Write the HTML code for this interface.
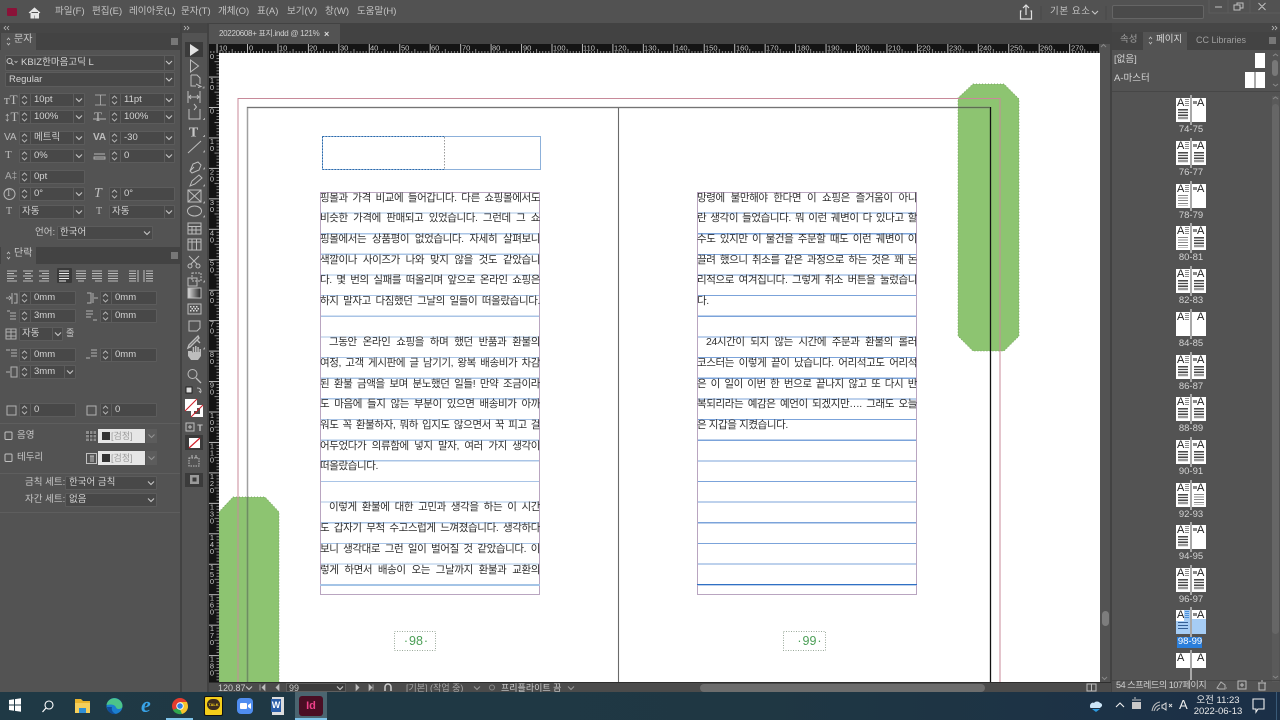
<!DOCTYPE html>
<html lang="ko">
<head>
<meta charset="utf-8">
<title>InDesign</title>
<style>
html,body{margin:0;padding:0;width:1280px;height:720px;overflow:hidden;background:#535353}
body{position:relative;font-family:"Liberation Sans","Noto Sans CJK KR",sans-serif;font-size:10px;color:#c8c8c8}
div,span.a{position:absolute;box-sizing:border-box}
.m{top:5px;font-size:9.5px;line-height:14px;white-space:nowrap;color:#c4c4c4}
.f{background:#484848;border:1px solid #5c5c5c;border-radius:1px;height:14px;font-size:9.5px;line-height:12px;white-space:nowrap;color:#d4d4d4}
.f span{position:absolute;top:0}
.d{position:absolute;top:0;bottom:0;width:1px;background:#5c5c5c}
.l{font-size:9.5px;line-height:14px;white-space:nowrap;color:#c8c8c8}
.tx{left:320px;width:220px;height:14px;line-height:14px;font-size:10.5px;letter-spacing:-.4px;color:#2e2e2e;text-align:justify;text-align-last:justify;font-family:"Liberation Sans","Noto Sans CJK KR",sans-serif;white-space:normal;overflow:hidden}
.tr{left:697px;width:220px}
.no{text-align-last:left}
.ind{text-indent:9px}
.t{left:1176px;width:30px;height:24px;background:#fff}
.t:before{content:"";position:absolute;left:14px;top:-3px;width:2px;height:30px;background:#a8a8a8}
.t b{position:absolute;top:0;left:1px;font-size:11px;line-height:11px;font-weight:400;color:#222;font-family:"Liberation Sans",sans-serif}
.t b+b{left:21px}
.t i{position:absolute;display:block;background:repeating-linear-gradient(to bottom,#4a4a4a 0 1.300px,#e8e8e8 1.300px 2.800px)}
.t i.la{left:2px;top:11px;width:10px;height:11px}
.t i.ra{left:18px;top:11px;width:10px;height:11px}
.t i.lc{left:2px;top:11px;width:10px;height:11px;background:repeating-linear-gradient(to bottom,#8a8a8a 0 1px,#fff 1px 2.600px)}
.t i.rc{left:18px;top:11px;width:10px;height:11px;background:repeating-linear-gradient(to bottom,#8a8a8a 0 1px,#fff 1px 2.600px)}
.t i.h1{left:9px;top:1px;width:4px;height:8px;background:repeating-linear-gradient(to bottom,#8a8a8a 0 1px,#fff 1px 2px)}
.t i.h2{left:17px;top:3px;width:4px;height:3px;background:#888}
.n{left:1176px;width:30px;text-align:center;font-size:9.5px;line-height:12px;color:#d4d4d4;white-space:nowrap}
.rul{font-family:"Liberation Sans",sans-serif;font-size:7.5px;fill:#c9c9c9}
</style>
</head>
<body>

<!-- top bar -->
<div style="left:0;top:0;width:1280px;height:23px;background:#525252"></div>
<div class="m" style="left:55px">파일(F)</div>
<div class="m" style="left:92px">편집(E)</div>
<div class="m" style="left:129px">레이아웃(L)</div>
<div class="m" style="left:181px">문자(T)</div>
<div class="m" style="left:218px">개체(O)</div>
<div class="m" style="left:257px">표(A)</div>
<div class="m" style="left:287px">보기(V)</div>
<div class="m" style="left:325px">창(W)</div>
<div class="m" style="left:357px">도움말(H)</div>
<div class="m" style="left:1050px;letter-spacing:.6px">기본 요소</div>
<div style="left:1112px;top:5px;width:92px;height:14px;background:#4a4a4a;border:1px solid #656565;border-radius:2px"></div>

<!-- panel strips -->
<div style="left:0;top:23px;width:181px;height:10px;background:#464646"></div>
<div style="left:0;top:33px;width:181px;height:17px;background:#434343"></div>
<div style="left:1px;top:33px;width:35px;height:17px;background:#535353"></div>
<div class="l" style="left:14px;top:33px;font-size:10px">문자</div>
<div style="left:171px;top:38px;width:7px;height:7px;background:#777"></div>
<div style="left:0;top:247px;width:181px;height:17px;background:#434343"></div>
<div style="left:1px;top:247px;width:35px;height:17px;background:#535353"></div>
<div class="l" style="left:14px;top:247px;font-size:10px">단락</div>
<div style="left:171px;top:252px;width:7px;height:7px;background:#777"></div>
<div style="left:180px;top:23px;width:2px;height:669px;background:#424242"></div>
<div style="left:182px;top:23px;width:26px;height:10px;background:#464646"></div>
<div style="left:207px;top:23px;width:2px;height:669px;background:#424242"></div>

<!-- character panel fields -->
<div class="f" style="left:5px;top:55px;width:170px;height:16px;line-height:14px"><span style="left:15px">KBIZ한마음고딕 L</span><i class="d" style="left:158px"></i></div>
<div class="f" style="left:5px;top:72px;width:170px;height:15px;line-height:13px"><span style="left:3px">Regular</span><i class="d" style="left:158px"></i></div>

<div class="f" style="left:19px;top:93px;width:66px"><i class="d" style="left:10px"></i><i class="d" style="left:53px"></i><span style="left:14px">10pt</span></div>
<div class="f" style="left:109px;top:93px;width:66px"><i class="d" style="left:10px"></i><i class="d" style="left:54px"></i><span style="left:14px">11pt</span></div>
<div class="f" style="left:19px;top:110px;width:66px"><i class="d" style="left:10px"></i><i class="d" style="left:53px"></i><span style="left:14px">100%</span></div>
<div class="f" style="left:109px;top:110px;width:66px"><i class="d" style="left:10px"></i><i class="d" style="left:54px"></i><span style="left:14px">100%</span></div>
<div class="f" style="left:19px;top:131px;width:66px"><i class="d" style="left:10px"></i><i class="d" style="left:53px"></i><span style="left:14px">메트릭</span></div>
<div class="f" style="left:109px;top:131px;width:66px"><i class="d" style="left:10px"></i><i class="d" style="left:54px"></i><span style="left:14px">-30</span></div>
<div class="f" style="left:19px;top:149px;width:66px"><i class="d" style="left:10px"></i><i class="d" style="left:53px"></i><span style="left:14px">0%</span></div>
<div class="f" style="left:109px;top:149px;width:66px"><i class="d" style="left:10px"></i><i class="d" style="left:54px"></i><span style="left:14px">0</span></div>
<div class="f" style="left:19px;top:170px;width:66px"><i class="d" style="left:10px"></i><span style="left:14px">0pt</span></div>
<div class="f" style="left:19px;top:187px;width:66px"><i class="d" style="left:10px"></i><i class="d" style="left:53px"></i><span style="left:14px">0°</span></div>
<div class="f" style="left:109px;top:187px;width:66px"><i class="d" style="left:10px"></i><span style="left:14px">0°</span></div>
<div class="f" style="left:19px;top:205px;width:66px"><i class="d" style="left:53px"></i><span style="left:2px">자동</span></div>
<div class="f" style="left:109px;top:205px;width:66px"><i class="d" style="left:54px"></i><span style="left:2px">자동</span></div>
<div class="l" style="left:35px;top:226px">언어:</div>
<div class="f" style="left:57px;top:226px;width:96px"><span style="left:2px">한국어</span></div>

<div class="l" style="left:4px;top:92px;font:400 13px/15px 'Liberation Serif',serif;color:#bdbdbd">ᴛT</div>
<div class="l" style="left:4px;top:109px;font:400 13px/15px 'Liberation Serif',serif;color:#bdbdbd">↕T</div>
<div class="l" style="left:4px;top:130px;font:400 10px/15px 'Liberation Sans',sans-serif;color:#bdbdbd">VA</div>
<div class="l" style="left:93px;top:130px;font:700 10px/15px 'Liberation Sans',sans-serif;color:#bdbdbd">VA</div>
<div class="l" style="left:94px;top:109px;font:400 13px/15px 'Liberation Serif',serif;color:#bdbdbd">T</div>
<div class="l" style="left:5px;top:148px;font:400 11px/15px 'Liberation Serif',serif;color:#bdbdbd">T</div>
<div class="l" style="left:5px;top:169px;font:400 10px/15px 'Liberation Sans',sans-serif;color:#a8a8a8">A‡</div>
<div class="l" style="left:94px;top:186px;font:italic 400 14px/15px 'Liberation Serif',serif;color:#bdbdbd">T</div>
<div class="l" style="left:6px;top:186px;font:400 9px/15px 'Liberation Serif',serif;color:#bdbdbd">T</div>
<div class="l" style="left:6px;top:204px;font:400 10px/15px 'Liberation Serif',serif;color:#bdbdbd">T</div>
<div class="l" style="left:96px;top:204px;font:400 10px/15px 'Liberation Serif',serif;color:#bdbdbd">T</div>

<!-- paragraph panel fields -->
<div class="f" style="left:19px;top:291px;width:57px"><i class="d" style="left:10px"></i><span style="left:14px">0mm</span></div>
<div class="f" style="left:100px;top:291px;width:57px"><i class="d" style="left:10px"></i><span style="left:14px">0mm</span></div>
<div class="f" style="left:19px;top:309px;width:57px"><i class="d" style="left:10px"></i><span style="left:14px">3mm</span></div>
<div class="f" style="left:100px;top:309px;width:57px"><i class="d" style="left:10px"></i><span style="left:14px">0mm</span></div>
<div class="f" style="left:19px;top:327px;width:44px"><i class="d" style="left:32px"></i><span style="left:2px">자동</span></div>
<div class="l" style="left:66px;top:326px;font-size:9px">줄</div>
<div class="f" style="left:19px;top:348px;width:57px"><i class="d" style="left:10px"></i><span style="left:14px">0mm</span></div>
<div class="f" style="left:100px;top:348px;width:57px"><i class="d" style="left:10px"></i><span style="left:14px">0mm</span></div>
<div class="f" style="left:19px;top:365px;width:57px"><i class="d" style="left:10px"></i><i class="d" style="left:44px"></i><span style="left:14px">3mm</span></div>
<div class="f" style="left:19px;top:403px;width:57px"><i class="d" style="left:10px"></i><span style="left:14px">0</span></div>
<div class="f" style="left:100px;top:403px;width:57px"><i class="d" style="left:10px"></i><span style="left:14px">0</span></div>
<div style="left:0;top:423px;width:180px;height:1px;background:#5e5e5e"></div>
<div class="l" style="left:17px;top:429px">음영</div>
<div class="l" style="left:17px;top:451px">테두리</div>
<div style="left:98px;top:429px;width:47px;height:14px;background:#e6e6e6"></div>
<div style="left:102px;top:432px;width:8px;height:8px;background:#333"></div>
<div class="l" style="left:111px;top:429px;color:#9a9a9a;font-size:9px">[검정]</div>
<div style="left:98px;top:451px;width:47px;height:14px;background:#e6e6e6"></div>
<div style="left:102px;top:454px;width:8px;height:8px;background:#333"></div>
<div class="l" style="left:111px;top:451px;color:#9a9a9a;font-size:9px">[검정]</div>
<div style="left:146px;top:429px;width:11px;height:14px;background:#5c5c5c"></div>
<div style="left:146px;top:451px;width:11px;height:14px;background:#5c5c5c"></div>
<div style="left:0;top:473px;width:180px;height:1px;background:#5e5e5e"></div>
<div class="l" style="left:25px;top:476px">금칙 세트:</div>
<div class="f" style="left:65px;top:476px;width:92px"><span style="left:3px">한국어 금칙</span></div>
<div class="l" style="left:25px;top:493px">자간 세트:</div>
<div class="f" style="left:65px;top:493px;width:92px"><span style="left:3px">없음</span></div>
<div style="left:0;top:512px;width:180px;height:1px;background:#5e5e5e"></div>

<!-- document tab -->
<div style="left:209px;top:23px;width:902px;height:21px;background:#424242"></div>
<div style="left:209px;top:24px;width:131px;height:20px;background:#535353"></div>
<div style="left:219px;top:27px;font-size:8px;letter-spacing:-.3px;line-height:14px;color:#d0d0d0;white-space:nowrap">20220608+ 표지.indd @ 121%</div>
<div style="left:324px;top:27px;font-size:9px;line-height:14px;color:#ddd;font-weight:700">×</div>

<!-- canvas -->
<div style="left:219px;top:53px;width:881px;height:630px;background:#fff;overflow:hidden"></div>

<!-- shapes -->
<svg style="position:absolute;left:0;top:0" width="1280" height="720" viewBox="0 0 1280 720">
  <defs>
    <clipPath id="cv"><rect x="219" y="53" width="881" height="630"/></clipPath>
  </defs>
  <g clip-path="url(#cv)">
    <polygon points="973,84 1004,84 1019,99 1019,336 1004,351 973,351 958,336 958,98" fill="#8dc471" stroke="#6f9a58" stroke-dasharray="1 2" stroke-width=".8"/>
    <polygon points="233,497 265,497 279,512 279,690 219,690 219,512" fill="#8dc471" stroke="#6f9a58" stroke-dasharray="1 2" stroke-width=".8"/>
    <!-- bleed -->
    <path d="M238 700V98.500H1000V700" fill="none" stroke="#c88a9a" stroke-width="1"/>
    <!-- page edges -->
    <path d="M247.500 700V107.500H990.500" fill="none" stroke="#a0a0a0" stroke-width="1.500"/>
    <path d="M618.500 107V700" stroke="#6a6a6a" stroke-width="1.100"/>
    <path d="M990.500 107V700" stroke="#111" stroke-width="1.300"/>
    <path d="M247 107.500H960" stroke="#747474" stroke-width="1"/>
    <path d="M958 107.500H990" stroke="#5d6e50" stroke-width="1.200"/>
    <path d="M247.500 497V690" stroke="#6d8e60" stroke-width="1.500"/>
    <!-- header frame -->
    <rect x="322.500" y="136.500" width="218" height="33" fill="none" stroke="#8cb0da" stroke-width="1"/>
    <path d="M322.500 136.500V169.500" stroke="#2c6aa8" stroke-dasharray="1.500 1.500"/>
    <path d="M322.500 136.500H444M322.500 169.500H444" stroke="#2c6aa8" stroke-dasharray="1.500 1.500"/>
    <path d="M444.500 137V169" stroke="#9a9a9a" stroke-dasharray="1.500 1.500"/>
    <!-- page number frames -->
    <rect x="394.500" y="631.500" width="41" height="19" fill="none" stroke="#9aa89a" stroke-dasharray="1 1.500"/>
    <rect x="783.500" y="631.500" width="42" height="19" fill="none" stroke="#9aa89a" stroke-dasharray="1 1.500"/>
  </g>
</svg>
<div style="left:395px;top:632px;width:42px;height:18px;line-height:18px;text-align:center;font-size:12.5px;word-spacing:-2.5px;color:#4a9e55;white-space:nowrap">· 98 ·</div>
<div style="left:788px;top:632px;width:43px;height:18px;line-height:18px;text-align:center;font-size:12.5px;word-spacing:-2.5px;color:#4a9e55;white-space:nowrap">· 99 ·</div>

<!-- text frames -->
<div style="left:320px;top:192px;width:220px;height:403px;border:1px solid #b9a5c0;background:repeating-linear-gradient(to bottom,transparent 0 19.4px,#a9c4e6 19.4px 20.65px)"></div>
<div style="left:320px;top:584px;width:220px;height:2px;background:#a4c4e6"></div>
<div style="left:697px;top:192px;width:220px;height:403px;border:1px solid #b9a5c0;background:repeating-linear-gradient(to bottom,transparent 0 19.5px,#7ba3da 19.5px 20.65px)"></div>
<div style="left:697px;top:584px;width:220px;height:1px;background:#2f70c4"></div>

<div class="tx" style="top:191px">핑몰과 가격 비교에 들어갑니다. 다른 쇼핑몰에서도</div>
<div class="tx" style="top:211px">비슷한 가격에 판매되고 있었습니다. 그런데 그 쇼</div>
<div class="tx" style="top:232px">핑몰에서는 상품평이 없었습니다. 자세히 살펴보니</div>
<div class="tx" style="top:253px">색깔이나 사이즈가 나와 맞지 않을 것도 같았습니</div>
<div class="tx" style="top:273px">다. 몇 번의 실패를 떠올리며 앞으로 온라인 쇼핑은</div>
<div class="tx" style="top:294px">하지 말자고 다짐했던 그날의 일들이 떠올랐습니다.</div>
<div class="tx ind" style="top:335px">그동안 온라인 쇼핑을 하며 했던 반품과 환불의</div>
<div class="tx" style="top:356px">여정, 고객 게시판에 글 남기기, 왕복 배송비가 차감</div>
<div class="tx" style="top:377px">된 환불 금액을 보며 분노했던 일들! 만약 조금이라</div>
<div class="tx" style="top:397px">도 마음에 들지 않는 부분이 있으면 배송비가 아까</div>
<div class="tx" style="top:418px">워도 꼭 환불하자, 뭐하 입지도 않으면서 꾹 피고 걸</div>
<div class="tx" style="top:439px">어두었다가 의류함에 넣지 말자, 여러 가지 생각이</div>
<div class="tx no" style="top:459px">떠올랐습니다.</div>
<div class="tx ind" style="top:500px">이렇게 환불에 대한 고민과 생각을 하는 이 시간</div>
<div class="tx" style="top:521px">도 갑자기 무척 수고스럽게 느껴졌습니다. 생각하다</div>
<div class="tx" style="top:542px">보니 생각대로 그런 일이 벌어질 것 같았습니다. 이</div>
<div class="tx" style="top:563px">렇게 하면서 배송이 오는 그날까지 환불과 교환의</div>

<div class="tx tr" style="top:191px">망령에 불만해야 한다면 이 쇼핑은 즐거움이 아니</div>
<div class="tx tr" style="top:211px">란 생각이 들었습니다. 뭐 이런 궤변이 다 있나고 할</div>
<div class="tx tr" style="top:232px">수도 있지만 이 물건을 주문할 때도 이런 궤변이 이</div>
<div class="tx tr" style="top:253px">끌려 했으니 취소를 같은 과정으로 하는 것은 꽤 논</div>
<div class="tx tr" style="top:273px">리적으로 여겨집니다. 그렇게 취소 버튼을 눌렀습니</div>
<div class="tx tr no" style="top:294px">다.</div>
<div class="tx tr ind" style="top:335px">24시간이 되지 않는 시간에 주문과 환불의 롤러</div>
<div class="tx tr" style="top:356px">코스터는 이렇게 끝이 났습니다. 어리석고도 어리석</div>
<div class="tx tr" style="top:377px">은 이 일이 이번 한 번으로 끝나지 않고 또 다시 반</div>
<div class="tx tr" style="top:397px">복되리라는 예감은 예언이 되겠지만…. 그래도 오늘</div>
<div class="tx tr no" style="top:418px">은 지갑을 지켰습니다.</div>

<!-- rulers -->
<svg style="position:absolute;left:209px;top:44px" width="891" height="9" viewBox="209 44 891 9">
  <defs>
    <pattern id="hp" x="247" y="44" width="30.450" height="9" patternUnits="userSpaceOnUse">
      <rect x="0" y="0" width="1" height="9" fill="#bbb"/>
      <rect x="3.040" y="7" width=".8" height="2" fill="#aaa"/><rect x="6.090" y="7" width=".8" height="2" fill="#aaa"/>
      <rect x="9.130" y="7" width=".8" height="2" fill="#aaa"/><rect x="12.180" y="7" width=".8" height="2" fill="#aaa"/>
      <rect x="15.220" y="5" width=".8" height="4" fill="#aaa"/><rect x="18.270" y="7" width=".8" height="2" fill="#aaa"/>
      <rect x="21.310" y="7" width=".8" height="2" fill="#aaa"/><rect x="24.360" y="7" width=".8" height="2" fill="#aaa"/>
      <rect x="27.400" y="7" width=".8" height="2" fill="#aaa"/>
    </pattern>
  </defs>
  <rect x="209" y="44" width="891" height="9" fill="#141414"/>
  <rect x="209" y="44" width="891" height="9" fill="url(#hp)"/>
  <g class="rul">
    <text x="219" y="50.500">10</text><text x="249" y="50.500">0</text><text x="279" y="50.500">10</text><text x="309" y="50.500">20</text><text x="340" y="50.500">30</text><text x="370" y="50.500">40</text><text x="401" y="50.500">50</text><text x="431" y="50.500">60</text><text x="462" y="50.500">70</text><text x="492" y="50.500">80</text><text x="523" y="50.500">90</text><text x="553" y="50.500">100</text><text x="583" y="50.500">110</text><text x="614" y="50.500">120</text><text x="644" y="50.500">130</text><text x="675" y="50.500">140</text><text x="705" y="50.500">150</text><text x="736" y="50.500">160</text><text x="766" y="50.500">170</text><text x="797" y="50.500">180</text><text x="827" y="50.500">190</text><text x="857" y="50.500">200</text><text x="888" y="50.500">210</text><text x="918" y="50.500">220</text><text x="949" y="50.500">230</text><text x="979" y="50.500">240</text><text x="1010" y="50.500">250</text><text x="1040" y="50.500">260</text><text x="1071" y="50.500">270</text>
  </g>
</svg>
<svg style="position:absolute;left:209px;top:53px" width="10" height="630" viewBox="209 53 10 630">
  <defs>
    <pattern id="vp" x="209" y="107" width="10" height="30.450" patternUnits="userSpaceOnUse">
      <rect x="0" y="0" width="10" height="1" fill="#bbb"/>
      <rect x="7.500" y="3.040" width="2.500" height=".8" fill="#aaa"/><rect x="7.500" y="6.090" width="2.500" height=".8" fill="#aaa"/>
      <rect x="7.500" y="9.130" width="2.500" height=".8" fill="#aaa"/><rect x="7.500" y="12.180" width="2.500" height=".8" fill="#aaa"/>
      <rect x="5.500" y="15.220" width="4.500" height=".8" fill="#aaa"/><rect x="7.500" y="18.270" width="2.500" height=".8" fill="#aaa"/>
      <rect x="7.500" y="21.310" width="2.500" height=".8" fill="#aaa"/><rect x="7.500" y="24.360" width="2.500" height=".8" fill="#aaa"/>
      <rect x="7.500" y="27.400" width="2.500" height=".8" fill="#aaa"/>
    </pattern>
  </defs>
  <rect x="209" y="53" width="10" height="630" fill="#141414"/>
  <rect x="209" y="53" width="10" height="630" fill="url(#vp)"/>
  <g class="rul" text-anchor="middle">
    <text x="212" y="59">0</text>
    <text x="212" y="83">1</text><text x="212" y="90">0</text>
    <text x="212" y="113.500">0</text>
    <text x="212" y="144">1</text><text x="212" y="151">0</text>
    <text x="212" y="174.500">2</text><text x="212" y="181.500">0</text>
    <text x="212" y="205">3</text><text x="212" y="212">0</text>
    <text x="212" y="235.500">4</text><text x="212" y="242.500">0</text>
    <text x="212" y="265.500">5</text><text x="212" y="272.500">0</text>
    <text x="212" y="296">6</text><text x="212" y="303">0</text>
    <text x="212" y="326.500">7</text><text x="212" y="333.500">0</text>
    <text x="212" y="357">8</text><text x="212" y="364">0</text>
    <text x="212" y="387.500">9</text><text x="212" y="394.500">0</text>
    <text x="212" y="418">1</text><text x="212" y="425">0</text><text x="212" y="432">0</text>
    <text x="212" y="448.500">1</text><text x="212" y="455.500">1</text><text x="212" y="462.500">0</text>
    <text x="212" y="479">1</text><text x="212" y="486">2</text><text x="212" y="493">0</text>
    <text x="212" y="509.500">1</text><text x="212" y="516.500">3</text><text x="212" y="523.500">0</text>
    <text x="212" y="540">1</text><text x="212" y="547">4</text><text x="212" y="554">0</text>
    <text x="212" y="570">1</text><text x="212" y="577">5</text><text x="212" y="584">0</text>
    <text x="212" y="600.500">1</text><text x="212" y="607.500">6</text><text x="212" y="614.500">0</text>
    <text x="212" y="631">1</text><text x="212" y="638">7</text><text x="212" y="645">0</text>
    <text x="212" y="661.500">1</text><text x="212" y="668.500">8</text><text x="212" y="675.500">0</text>
  </g>
</svg>

<!-- scroll -->
<div style="left:1100px;top:44px;width:11px;height:639px;background:#535353"></div>
<div style="left:1102px;top:611px;width:7px;height:15px;border-radius:4px;background:#7d7d7d"></div>
<div style="left:1110px;top:23px;width:2px;height:669px;background:#424242"></div>

<!-- status bar -->
<div style="left:209px;top:683px;width:902px;height:9px;background:#4b4b4b;overflow:hidden"></div>
<div style="left:209px;top:682px;width:902px;height:1px;background:#2e2e2e"></div>
<div style="left:218px;top:683px;font-size:9px;line-height:10px;white-space:nowrap;color:#cfcfcf">120.87</div>
<div style="left:286px;top:683px;width:60px;height:9px;background:#3d3d3d;border:1px solid #5f5f5f;font-size:9px;line-height:8px;padding-left:2px;color:#cfcfcf">99</div>
<div style="left:406px;top:683px;font-size:9px;line-height:10px;white-space:nowrap;color:#a8a8a8">[기본] (작업 중)</div>
<div style="left:501px;top:683px;font-size:9px;line-height:10px;white-space:nowrap;color:#cfcfcf">프리플라이트 끔</div>
<div style="left:700px;top:684px;width:285px;height:8px;border-radius:4px;background:#6d6d6d"></div>

<!-- right panel -->
<div style="left:1112px;top:23px;width:168px;height:9px;background:#464646"></div>
<div style="left:1112px;top:32px;width:168px;height:18px;background:#434343"></div>
<div style="left:1143px;top:32px;width:44px;height:18px;background:#535353"></div>
<div class="l" style="left:1120px;top:33px;color:#9f9f9f">속성</div>
<div class="l" style="left:1156px;top:33px;color:#d8d8d8">페이지</div>
<div class="l" style="left:1196px;top:33px;color:#9f9f9f;font-size:9px">CC Libraries</div>
<div style="left:1269px;top:37px;width:7px;height:7px;background:#777"></div>
<div class="l" style="left:1114px;top:53px;color:#d4d4d4">[없음]</div>
<div class="l" style="left:1114px;top:72px;color:#d4d4d4">A-마스터</div>
<div style="left:1255px;top:53px;width:10px;height:15px;background:#fff"></div>
<div style="left:1245px;top:72px;width:20px;height:16px;background:#fff"></div>
<div style="left:1254px;top:72px;width:2px;height:16px;background:#aaa"></div>
<div style="left:1272px;top:60px;width:6px;height:16px;border-radius:3px;background:#787878"></div>
<div style="left:1112px;top:91px;width:168px;height:1px;background:#474747"></div>
<div style="left:1272px;top:96px;width:7px;height:586px;background:#5a5a5a"></div>
<div style="left:1272px;top:104px;width:7px;height:530px;background:#666;border-radius:4px"></div>
<div style="left:1112px;top:680px;width:168px;height:1px;background:#474747"></div>

<!-- thumbnails -->
<div class="t" style="top:98px"><i class="h1"></i><i class="h2"></i><i class="la"></i><b>A</b><b>A</b></div>
<div class="n" style="top:124px">74-75</div>
<div class="t" style="top:141px"><i class="h1"></i><i class="h2"></i><i class="la"></i><i class="ra"></i><b>A</b><b>A</b></div>
<div class="n" style="top:167px">76-77</div>
<div class="t" style="top:184px"><i class="h1"></i><i class="h2"></i><i class="lc"></i><b>A</b><b>A</b></div>
<div class="n" style="top:210px">78-79</div>
<div class="t" style="top:226px"><i class="h1"></i><i class="h2"></i><i class="lc"></i><i class="ra"></i><b>A</b><b>A</b></div>
<div class="n" style="top:252px">80-81</div>
<div class="t" style="top:269px"><i class="h1"></i><i class="h2"></i><i class="la"></i><i class="ra"></i><b>A</b><b>A</b></div>
<div class="n" style="top:295px">82-83</div>
<div class="t" style="top:312px"><i class="h1"></i><b>A</b><b>A</b></div>
<div class="n" style="top:338px">84-85</div>
<div class="t" style="top:355px"><i class="h1"></i><i class="h2"></i><i class="la"></i><i class="ra"></i><b>A</b><b>A</b></div>
<div class="n" style="top:381px">86-87</div>
<div class="t" style="top:397px"><i class="h1"></i><i class="h2"></i><i class="la"></i><i class="ra"></i><b>A</b><b>A</b></div>
<div class="n" style="top:423px">88-89</div>
<div class="t" style="top:440px"><i class="h1"></i><i class="h2"></i><i class="la"></i><i class="ra"></i><b>A</b><b>A</b></div>
<div class="n" style="top:466px">90-91</div>
<div class="t" style="top:483px"><i class="h1"></i><i class="h2"></i><i class="la"></i><i class="rc"></i><b>A</b><b>A</b></div>
<div class="n" style="top:509px">92-93</div>
<div class="t" style="top:525px"><i class="h1"></i><i class="h2"></i><i class="la"></i><b>A</b><b>A</b></div>
<div class="n" style="top:551px">94-95</div>
<div class="t" style="top:568px"><i class="h1"></i><i class="h2"></i><i class="la"></i><i class="ra"></i><b>A</b><b>A</b></div>
<div class="n" style="top:594px">96-97</div>
<div class="t" style="top:610px;background:#a6cdf5"><i style="left:0;top:0;width:8px;height:11px;background:#fff"></i><i style="left:16px;top:0;width:14px;height:9px;background:#fff"></i><i class="h1" style="background:repeating-linear-gradient(to bottom,#4a90dc 0 1px,#a6cdf5 1px 2px)"></i><i class="h2"></i><i class="lc" style="top:12px;height:8px;background:repeating-linear-gradient(to bottom,#345f96 0 1px,#a6cdf5 1px 3px)"></i><b>A</b><b>A</b></div>
<div style="left:1177px;top:637px;width:25px;height:11px;background:#2a7edb"></div>
<div class="n" style="top:636px;left:1175px;color:#fff">98-99</div>
<div class="t" style="top:653px;height:15px"><b>A</b><b>A</b></div>
<div class="l" style="left:1116px;top:678px;font-size:9px;letter-spacing:-.4px;white-space:nowrap;color:#d0d0d0">54 스프레드의 107페이지</div>

<!-- taskbar -->
<div style="left:0;top:692px;width:1280px;height:28px;background:linear-gradient(to right,#1f3945 0,#1f3743 60%,#1b2f47 100%)"></div>
<div style="left:295px;top:692px;width:32px;height:28px;background:#4b6570"></div>
<div style="left:166px;top:718px;width:27px;height:2px;background:#7fc4ea"></div>
<div style="left:295px;top:718px;width:32px;height:2px;background:#7fc4ea"></div>
<div style="left:1192px;top:695px;width:52px;height:12px;font-size:9.5px;line-height:12px;text-align:center;color:#e8e8e8;white-space:nowrap">오전 11:23</div>
<div style="left:1192px;top:706px;width:52px;height:12px;font-size:9.5px;line-height:12px;text-align:center;color:#e8e8e8;white-space:nowrap">2022-06-13</div>
<div style="left:1179px;top:697px;font-size:13px;line-height:16px;color:#eee">A</div>
<div style="left:299px;top:696px;width:24px;height:20px;background:#4a0e24;border-radius:3px;font:700 11px/20px 'Liberation Sans',sans-serif;text-align:center;color:#f0418a">Id</div>
<div style="left:141px;top:694px;font:italic 700 22px/22px 'Liberation Serif',serif;color:#38a3e8">e</div>
<div style="left:204px;top:696px;width:19px;height:20px;background:#f5cf1a;border:1px solid #111;border-radius:2px"></div>
<div style="left:207px;top:699px;width:13px;height:11px;background:#3c2c1e;border-radius:6px;font:700 4px/11px 'Liberation Sans',sans-serif;color:#f5cf1a;text-align:center">TALK</div>
<div style="left:272px;top:697px;width:12px;height:18px;background:#ddd"></div>
<div style="left:271px;top:699px;width:10px;height:13px;background:#2b5ea8;font:700 9px/13px 'Liberation Sans',sans-serif;color:#fff;text-align:center">W</div>

<!-- icon overlay -->
<svg style="position:absolute;left:0;top:0;pointer-events:none" width="1280" height="720" viewBox="0 0 1280 720">
  <defs>
    <g id="sp" fill="none" stroke="#b8b8b8" stroke-width=".9"><path d="M3 5.500l2.500-2.500 2.500 2.500M3 8.500l2.500 2.500 2.500-2.500"/></g>
    <path id="ch" d="M0 0l3 3 3-3" fill="none" stroke="#c8c8c8" stroke-width="1.100"/>
  </defs>

  <!-- top bar icons -->
  <rect x="7" y="8" width="10" height="8" rx="1" fill="#8a1238"/>
  <path d="M29 13l5.500-5 5.500 5M31 12v6h3v-3h1.500v3h3v-6" fill="#e6e6e6" stroke="#e6e6e6" stroke-width="1"/>
  <path d="M1021.500 11h-1v8h11v-8h-1M1026 15V5M1023 8l3-3 3 3" fill="none" stroke="#e0e0e0" stroke-width="1.200"/>
  <use href="#ch" x="1092" y="11"/>
  <path d="M1041 6v14M1106 6v14" stroke="#484848"/>
  <path d="M1215 7h7M1234 5h6v5h-6zM1237 5v-2h6v5h-3M1258.500 3l7 7M1265.500 3l-7 7" fill="none" stroke="#c0c0c0" stroke-width="1"/>
  <path d="M1209 0v13h71" fill="none" stroke="#5c5c5c"/>
  <path d="M1228 0v13M1250 0v13" stroke="#5c5c5c"/>

  <!-- panel collapse arrows -->
  <path d="M6 26l-2 2 2 2M9 26l-2 2 2 2M184 26l2 2-2 2M187 26l2 2-2 2M1272 26l2 2-2 2M1275 26l2 2-2 2" fill="none" stroke="#bdbdbd" stroke-width=".8"/>
  <path d="M7 40l1.500-2 1.500 2M7 43l1.500 2 1.500-2M7 254l1.500-2 1.500 2M7 257l1.500 2 1.500-2M1149 39l1.500-2 1.500 2M1149 42l1.500 2 1.500-2" fill="none" stroke="#c0c0c0" stroke-width=".8"/>

  <!-- search icon in font field -->
  <circle cx="9.500" cy="61" r="2.500" fill="none" stroke="#c8c8c8"/><path d="M11.500 63l2 2" stroke="#c8c8c8"/>
  <path d="M14.500 61l1.500 1.500 1.500-1.500" fill="none" stroke="#c8c8c8" stroke-width=".8"/>

  <!-- chevrons: character -->
  <use href="#ch" x="166" y="61"/><use href="#ch" x="166" y="78"/>
  <use href="#ch" x="76" y="98.500"/><use href="#ch" x="166" y="98.500"/>
  <use href="#ch" x="76" y="115.500"/><use href="#ch" x="166" y="115.500"/>
  <use href="#ch" x="76" y="136.500"/><use href="#ch" x="166" y="136.500"/>
  <use href="#ch" x="76" y="154.500"/><use href="#ch" x="166" y="154.500"/>
  <use href="#ch" x="76" y="192.500"/>
  <use href="#ch" x="76" y="210.500"/><use href="#ch" x="166" y="210.500"/>
  <use href="#ch" x="144" y="231.500"/>
  <!-- spinners: character -->
  <use href="#sp" x="19" y="93"/><use href="#sp" x="109" y="93"/>
  <use href="#sp" x="19" y="110"/><use href="#sp" x="109" y="110"/>
  <use href="#sp" x="19" y="131"/><use href="#sp" x="109" y="131"/>
  <use href="#sp" x="19" y="149"/><use href="#sp" x="109" y="149"/>
  <use href="#sp" x="19" y="170"/>
  <use href="#sp" x="19" y="187"/><use href="#sp" x="109" y="187"/>
  <!-- leading + misc glyphs -->
  <path d="M95 95h11M95 105h11M100.500 95v10" fill="none" stroke="#b5b5b5" stroke-width=".8"/>
  <path d="M93 119h13M94 154h11M94 157h11v2H94z" fill="none" stroke="#b5b5b5" stroke-width=".9"/>
  <circle cx="9.500" cy="194" r="5.500" fill="none" stroke="#b5b5b5"/>

  <!-- align buttons -->
  <rect x="57" y="268" width="15" height="15" rx="1" fill="#3a3a3a"/>
  <g stroke="#bdbdbd" stroke-width="1" fill="none">
    <path d="M7 271h10M7 273.500h7M7 276h10M7 278.500h7M7 281h10"/>
    <path d="M23 271h10M25 273.500h6M23 276h10M25 278.500h6M23 281h10"/>
    <path d="M39 271h10M42 273.500h7M39 276h10M42 278.500h7M39 281h10"/>
    <path d="M59 271h10M59 273.500h10M59 276h10M59 278.500h10M59 281h7" stroke="#ececec"/>
    <path d="M76 271h10M76 273.500h10M76 276h10M76 278.500h10M78 281h6"/>
    <path d="M92 271h10M92 273.500h10M92 276h10M92 278.500h10M95 281h7"/>
    <path d="M108 271h10M108 273.500h10M108 276h10M108 278.500h10M108 281h10"/>
    <path d="M129 271h7M129 273.500h7M129 276h7M129 278.500h7M129 281h7M138 270v12"/>
    <path d="M146 271h7M146 273.500h7M146 276h7M146 278.500h7M146 281h7M144 270v12"/>
  </g>
  <!-- paragraph glyphs -->
  <g fill="none" stroke="#b0b0b0" stroke-width="1">
    <path d="M6 298h3M9 296l2 2-2 2M12 293v11M14 294h3v9h-3"/>
    <path d="M87 293h4v10h-4M93 293v10M94 298h4"/>
    <path d="M7 311h3M10 313h6M10 316h6M10 319h6"/>
    <path d="M86 311h7M86 314h7M86 317h5M93 320h4"/>
    <rect x="6" y="329" width="10" height="10"/><path d="M6 332h10M6 336h10M11 329v10"/>
    <path d="M6 350h4M11 350h6M11 353h6M11 356h6"/>
    <path d="M86 358h4M91 350h6M91 353h6M91 356h6"/>
    <path d="M6 372h4M11 367h6v10h-6z"/>
    <rect x="7" y="406" width="9" height="9"/><rect x="87" y="406" width="9" height="9"/>
  </g>
  <use href="#ch" x="55" y="332.500"/>
  <use href="#ch" x="67" y="370.500"/>
  <!-- paragraph spinners -->
  <use href="#sp" x="19" y="291"/><use href="#sp" x="100" y="291"/>
  <use href="#sp" x="19" y="309"/><use href="#sp" x="100" y="309"/>
  <use href="#sp" x="19" y="348"/><use href="#sp" x="100" y="348"/>
  <use href="#sp" x="19" y="365"/>
  <use href="#sp" x="19" y="403"/><use href="#sp" x="100" y="403"/>
  <!-- shading -->
  <rect x="5" y="432" width="7" height="7.500" rx="1" fill="none" stroke="#c0c0c0"/>
  <rect x="5" y="454" width="7" height="7.500" rx="1" fill="none" stroke="#c0c0c0"/>
  <rect x="86" y="431" width="10" height="10" fill="#8c8c8c"/><path d="M86 434.500h10M86 438h10M89.500 431v10M93 431v10" stroke="#444"/>
  <rect x="86.500" y="453.500" width="10" height="10" fill="none" stroke="#c0c0c0"/><path d="M91 456v6M93 456v6M90 456h4" stroke="#c0c0c0" fill="none"/>
  <use href="#ch" x="148.500" y="434.500" opacity=".5"/><use href="#ch" x="148.500" y="456.500" opacity=".5"/>
  <use href="#ch" x="148" y="481.500"/><use href="#ch" x="148" y="498.500"/>

  <!-- tools -->
  <rect x="185" y="42" width="18" height="15" fill="#3b3b3b"/>
  <path d="M190 44v12l9-6z" fill="#e2e2e2"/>
  <g fill="none" stroke="#bdbdbd" stroke-width="1">
    <path d="M190.500 60v12l8-6z"/>
    <path d="M191 75h6l3 3v6M191 75v11h5M196 84l5 2.500-3 1"/>
    <path d="M188 91v12M200 91v12M190 97h8M191 95l-2 2 2 2M197 95l2 2-2 2"/>
    <path d="M189 109v10h11v-10M194 104l2.500 3-2.500 3"/>
    <path d="M188 153l13-12"/>
    <path d="M190 171l3-7 5-2 3 3-2 5-7 3zM190 171l4-4"/>
    <path d="M190 186l2-5 7-6 3 3-7 6zM190 186l1-1"/>
    <rect x="188" y="190" width="13" height="12"/><path d="M188 190l13 12M201 190l-13 12"/>
    <ellipse cx="194.500" cy="211" rx="7" ry="5"/>
    <rect x="188" y="223" width="13" height="11"/><path d="M188 226.500h13M188 230h13M192 226v8M196 226v8"/>
    <rect x="188" y="239" width="13" height="11"/><path d="M188 242h13M192 239v11M196.500 239v11M201 239v11"/>
    <circle cx="190" cy="266" r="2"/><circle cx="198" cy="266" r="2"/><path d="M191 264l8-8M197 264l-8-8"/>
    <rect x="188" y="278" width="9" height="8"/><rect x="192" y="273" width="9" height="8" stroke-dasharray="2 1"/>
    <path d="M189 329v-8h11v7l-3 3h-8z"/>
    <path d="M199 338l-3 3-6 6-2 1 1-3 6-6 3-3zM197 340l3 3" stroke-width="1.400"/>
    <circle cx="192.500" cy="374" r="4.500"/><path d="M196 378l5 5" stroke-width="1.300"/>
  </g>
  <g fill="#bdbdbd">
    <path d="M188 351v5l3 4h7l3-4v-7h-1.500v3h-.7v-5h-1.500v5h-.8v-6h-1.500v6h-.8v-5h-1.500v6l-1-2z"/>
  </g>
  <defs><linearGradient id="gr" x1="0" x2="1" y1="0" y2="0"><stop offset="0" stop-color="#ddd"/><stop offset="1" stop-color="#222"/></linearGradient></defs>
  <rect x="188" y="288" width="13" height="10" fill="url(#gr)" stroke="#bdbdbd"/>
  <rect x="188" y="304" width="13" height="10" fill="#555" stroke="#bdbdbd"/>
  <path d="M190 306h1.500v1.500H190zM193 306h1.500v1.500H193zM196 306h1.500v1.500H196zM191.500 308h1.500v1.500h-1.500zM194.500 308h1.500v1.500h-1.500zM197.500 308h1.500v1.500h-1.500zM190 310h1.500v1.500H190zM193 310h1.500v1.500H193zM196 310h1.500v1.500H196z" fill="#ddd"/>
  <text x="193.500" y="136.500" text-anchor="middle" font-family="Liberation Serif,serif" font-weight="700" font-size="14" fill="#c8c8c8">T</text>
  <path d="M202.500 88h1.500v-1.500M203 119.500h1.500V118M203 136.500h1.500V135M203 152h1.500v-1.500M203 169h1.500v-1.500M203 186h1.500v-1.500M203 203h1.500v-1.500M203 217h1.500v-1.500M203 282h1.500v-1.500M203 349h1.500v-1.500" fill="none" stroke="#bdbdbd" stroke-width=".8"/>

  <!-- default/swap -->
  <rect x="186" y="387" width="6" height="6" fill="#ddd" stroke="#222"/>
  <path d="M199 391l2 2M197 388c3 0 4 1 4 4" fill="none" stroke="#bdbdbd"/>
  <!-- fill & stroke -->
  <rect x="191" y="405" width="12" height="12" fill="#fff"/>
  <rect x="194" y="408" width="6" height="6" fill="#535353"/>
  <path d="M191 417l12-12" stroke="#d0202a" stroke-width="1.100"/>
  <rect x="185" y="399" width="12" height="12" fill="#fff"/>
  <path d="M185 411l12-12" stroke="#d0202a" stroke-width="1.100"/>
  <!-- format -->
  <rect x="186" y="423" width="8" height="8" fill="none" stroke="#c0c0c0"/><path d="M190 425v4M188 427h4" stroke="#c0c0c0"/>
  <text x="200" y="431" text-anchor="middle" font-family="Liberation Sans,sans-serif" font-weight="700" font-size="9" fill="#c0c0c0">T</text>
  <!-- apply none -->
  <rect x="185" y="435" width="18" height="15" fill="#3b3b3b"/>
  <rect x="189" y="438" width="11" height="10" fill="#fff"/><path d="M189 448l11-10" stroke="#d0202a" stroke-width="1.200"/>
  <!-- view -->
  <rect x="189" y="458" width="10" height="8" fill="none" stroke="#bdbdbd" stroke-dasharray="1.500 1"/><path d="M192 455v3M196 455v3" stroke="#bdbdbd"/>
  <rect x="185" y="473" width="18" height="14" fill="#3b3b3b"/>
  <rect x="190" y="475" width="9" height="9" fill="#9a9a9a"/><rect x="192.500" y="477.500" width="4" height="4" fill="#3b3b3b"/>

  <!-- status bar -->
  <use href="#ch" x="246" y="686.500"/>
  <path d="M260 684.500v6M262 687.500l3-3v6zM276 687.500l3-3v6z" fill="#bdbdbd" stroke="#bdbdbd" stroke-width=".7"/>
  <use href="#ch" x="337" y="686.500"/>
  <path d="M356 684.500l3 3-3 3zM369 684.500l3 3-3 3zM373 684.500v6" fill="#bdbdbd" stroke="#bdbdbd" stroke-width=".7"/>
  <path d="M385 691v-4a3 3 0 0 1 6 0v4" fill="none" stroke="#cfcfcf" stroke-width="1.500"/>
  <use href="#ch" x="474" y="686.500" opacity=".6"/>
  <circle cx="492" cy="687.500" r="2.500" fill="none" stroke="#888"/>
  <use href="#ch" x="568" y="686.500" opacity=".6"/>
  <rect x="1087" y="684" width="9" height="7" fill="none" stroke="#bdbdbd"/><path d="M1091.500 684v7" stroke="#bdbdbd"/>
  <path d="M1101 47l2.500-2.500 2.500 2.500" fill="none" stroke="#888"/>
  <path d="M1102 677l2.500 2.500 2.500-2.500" fill="none" stroke="#888"/>
  <path d="M1273 56l2.500-2 2.500 2M1273 84l2.500 2 2.500-2M1273 99l2.500-2 2.500 2M1273 676l2.500 2 2.500-2" fill="none" stroke="#888"/>

  <!-- footer icons -->
  <path d="M1217 688l4-6 4 3 0 4h-6zM1226 688h.8" fill="none" stroke="#b0b0b0"/>
  <rect x="1238" y="681" width="8" height="8" fill="none" stroke="#bdbdbd"/><path d="M1242 683v4M1240 685h4" stroke="#bdbdbd"/>
  <path d="M1258 683h8M1259 683v7h6v-7M1261 681h2" fill="none" stroke="#bdbdbd"/>

  <!-- windows icon -->
  <path d="M9 700l5-.7v5.200h-5zM15 699.100l6-.9v6.300h-6zM9 705.500h5v5.200l-5-.7zM15 705.500h6v6.300l-6-.9z" fill="#fff"/>
  <!-- search -->
  <circle cx="49" cy="705" r="4" fill="none" stroke="#fff" stroke-width="1.100"/><path d="M46 708l-3.500 4" stroke="#fff" stroke-width="1.200"/>
  <!-- explorer -->
  <path d="M75 699h6l2 2h7v3H75z" fill="#e9b42c"/><rect x="75" y="703" width="15" height="10" fill="#f5cf5b"/><rect x="79" y="708" width="7" height="5" fill="#2f8fd6"/>
  <!-- edge -->
  <circle cx="114.500" cy="706" r="8" fill="#1b7fd0"/><path d="M106.500 705c1-6 7-8 11-6 3 1 5 4 5 7 0 2-2 3-4 3-3 0-2-3-5-4-3-1-6 0-7 0z" fill="#4cc48a"/><path d="M107 707c0 4 4 8 9 7-3-1-5-4-4-7z" fill="#114e9a"/>
  <!-- chrome -->
  <circle cx="180" cy="706" r="8" fill="#e33b2e"/>
  <path d="M173 710a8 8 0 0 0 9 4l3.500-7H180z" fill="#2fa84f"/>
  <path d="M188 706a8 8 0 0 1-6 8l-3-7 1-5h7z" fill="#f8c52b"/>
  <circle cx="180" cy="706" r="3.700" fill="#fff"/><circle cx="180" cy="706" r="2.800" fill="#2f7fe6"/>
  <!-- zoom -->
  <rect x="237" y="698" width="16" height="16" rx="4" fill="#4f8df0"/><rect x="240" y="703" width="7" height="6" rx="1" fill="#fff"/><path d="M248 705l3-2v6l-3-2z" fill="#fff"/>

  <!-- tray -->
  <path d="M1090 706c0-3 3-4 4-3 1-2 5-2 6 0 2 0 3 3 1 4l-1 1h-9c-1 0-1-1-1-2z" fill="#cce6f8"/>
  <path d="M1092 709l4 3 4-3" fill="#2c9be0"/>
  <path d="M1116 707l4-4 4 4" fill="none" stroke="#f0f0f0" stroke-width="1.100"/>
  <rect x="1132" y="702" width="9" height="7" fill="#c8c8c8"/><path d="M1132 700h9M1134 698h2" stroke="#c8c8c8"/>
  <path d="M1152 711c1-5 3-8 8-9M1154 711c1-3 2-5 6-6M1157 711c0-1 1-2 3-3" fill="none" stroke="#c0c0c0"/>
  <path d="M1166 703l-3 2h-1v3h1l3 2zM1169 704l3 3M1172 704l-3 3" fill="none" stroke="#dcdcdc"/>
  <path d="M1253 699h11v10h-6l-2 3v-3h-3z" fill="none" stroke="#f0f0f0" stroke-width="1.100"/>
  <path d="M1276.500 692v28" stroke="#3a5a78"/>
</svg>
</body>
</html>
